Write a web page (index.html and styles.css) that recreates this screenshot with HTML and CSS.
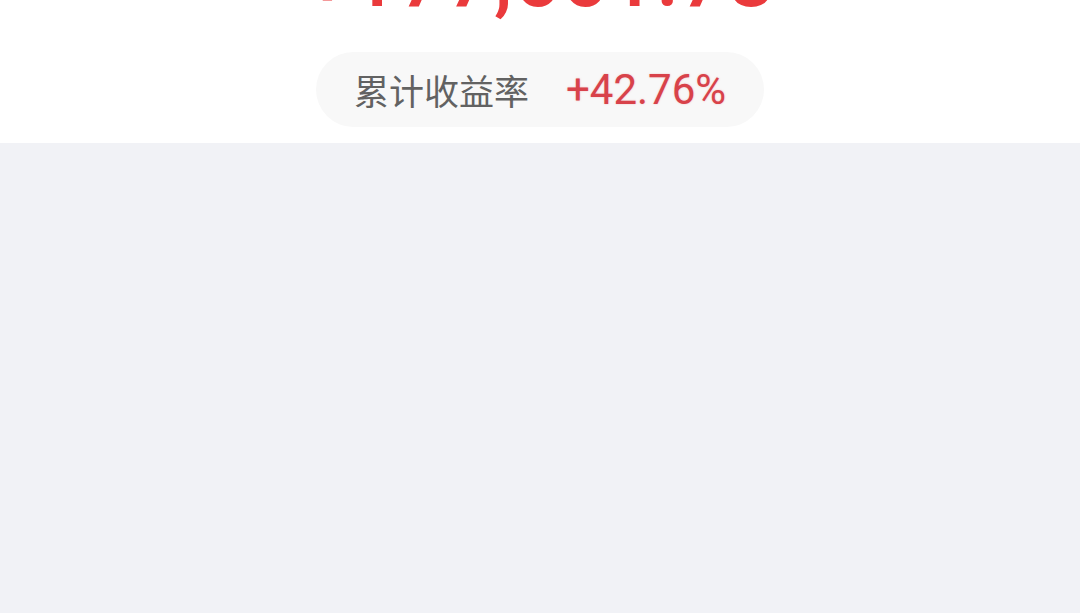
FILE: index.html
```html
<!DOCTYPE html>
<html lang="zh-CN">
<head>
<meta charset="utf-8">
<link rel="stylesheet" href="styles.css">
</head>
<body>
<section class="summary">
  <div class="total">+177,661.78</div>
  <div class="rate-pill">
    <span class="rate-label">累计收益率</span>
    <span class="rate-value">+42.76%</span>
  </div>
</section>
<main class="content"></main>
</body>
</html>
```
FILE: styles.css
```css
html, body {
  margin: 0;
  padding: 0;
}
body {
  background: #f1f2f6;
  font-family: Roboto, "Noto Sans CJK SC", sans-serif;
  width: 1080px;
  height: 613px;
  overflow: hidden;
}
.summary {
  background: #ffffff;
  display: flex;
  flex-direction: column;
  align-items: center;
  padding-bottom: 16px;
}
.total {
  margin-top: -62px;
  font-size: 82px;
  line-height: 80px;
  font-weight: 500;
  color: #ea3a3c;
  letter-spacing: 1px;
}
.rate-pill {
  margin-top: 34px;
  height: 75px;
  box-sizing: border-box;
  padding: 0 38px;
  border-radius: 38px;
  background: #f8f8f8;
  display: flex;
  align-items: center;
  gap: 37px;
}
.rate-label {
  font-family: "Noto Sans CJK SC", sans-serif;
  font-size: 35px;
  color: #626262;
}
.rate-value {
  font-size: 42px;
  color: #d8424a;
  text-shadow: 0 0 2px rgba(230, 80, 90, 0.35);
}
```
